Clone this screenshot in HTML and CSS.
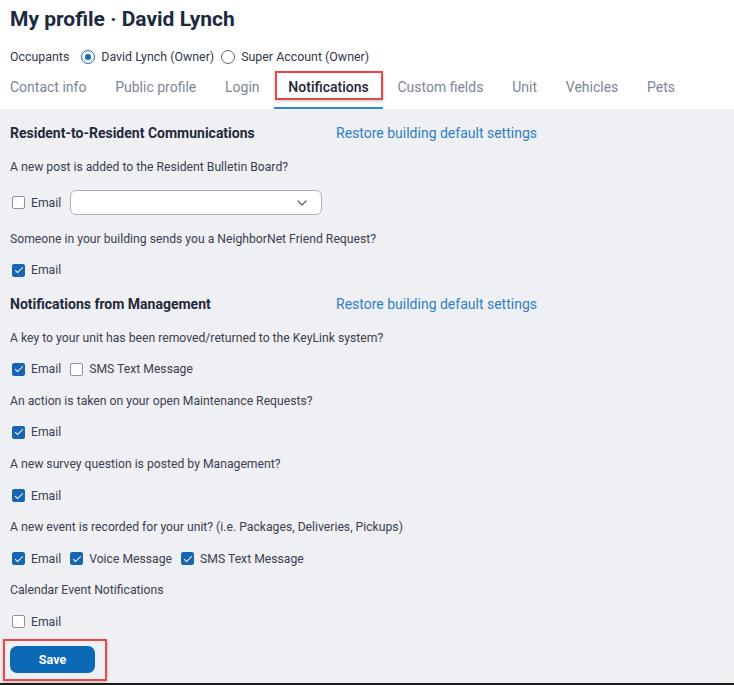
FILE: index.html
```html
<!DOCTYPE html>
<html lang="en">
<head>
<meta charset="utf-8">
<title>My profile · David Lynch</title>
<link rel="stylesheet" href="styles.css">
</head>
<body>
<div class="page">
  <header class="header">
    <h1 class="title">My profile · David Lynch</h1>
    <div class="occupants">
      <span class="occ-label">Occupants</span>
      <label class="radio"><span class="radio-dot checked"></span>David Lynch (Owner)</label>
      <label class="radio"><span class="radio-dot"></span>Super Account (Owner)</label>
    </div>
    <nav class="tabs">
      <span class="tab">Contact info</span>
      <span class="tab">Public profile</span>
      <span class="tab">Login</span>
      <span class="tab active">Notifications<span class="highlight"></span></span>
      <span class="tab">Custom fields</span>
      <span class="tab">Unit</span>
      <span class="tab">Vehicles</span>
      <span class="tab">Pets</span>
    </nav>
  </header>

  <main class="content">
    <div class="section-head">
      <span class="section-title">Resident-to-Resident Communications</span>
      <a class="restore">Restore building default settings</a>
    </div>
    <p class="question">A new post is added to the Resident Bulletin Board?</p>
    <div class="options select-row">
      <label class="check"><span class="box"></span>Email</label>
      <div class="select">
        <svg class="chev" viewBox="0 0 10 6" width="10" height="6"><path d="M1 1l4 4 4-4" fill="none" stroke="#6c7683" stroke-width="1.6" stroke-linecap="round" stroke-linejoin="round"/></svg>
      </div>
    </div>
    <p class="question">Someone in your building sends you a NeighborNet Friend Request?</p>
    <div class="options">
      <label class="check"><span class="box on"></span>Email</label>
    </div>

    <div class="section-head">
      <span class="section-title">Notifications from Management</span>
      <a class="restore">Restore building default settings</a>
    </div>
    <p class="question">A key to your unit has been removed/returned to the KeyLink system?</p>
    <div class="options">
      <label class="check"><span class="box on"></span>Email</label>
      <label class="check"><span class="box"></span>SMS Text Message</label>
    </div>
    <p class="question">An action is taken on your open Maintenance Requests?</p>
    <div class="options">
      <label class="check"><span class="box on"></span>Email</label>
    </div>
    <p class="question">A new survey question is posted by Management?</p>
    <div class="options">
      <label class="check"><span class="box on"></span>Email</label>
    </div>
    <p class="question">A new event is recorded for your unit? (i.e. Packages, Deliveries, Pickups)</p>
    <div class="options">
      <label class="check"><span class="box on"></span>Email</label>
      <label class="check"><span class="box on"></span>Voice Message</label>
      <label class="check"><span class="box on"></span>SMS Text Message</label>
    </div>
    <p class="question">Calendar Event Notifications</p>
    <div class="options">
      <label class="check"><span class="box"></span>Email</label>
    </div>
    <div class="actions">
      <button class="save">Save<span class="highlight save-hl"></span></button>
    </div>
  </main>
</div>
</body>
</html>
```

FILE: styles.css
```css
* { box-sizing: border-box; }

html, body {
  margin: 0;
  padding: 0;
  background: #eff0f4;
  font-family: Roboto, "Liberation Sans", Arial, sans-serif;
  color: #3b4250;
}

.page {
  width: 734px;
  height: 685px;
  overflow: hidden;
  display: flex;
  flex-direction: column;
}

.header {
  background: #ffffff;
  padding: 7px 0 0 10px;
}

.title {
  margin: 0;
  font-size: 21px;
  line-height: 24px;
  font-weight: 700;
  color: #1b2a40;
}

.occupants {
  margin-top: 18px;
  display: flex;
  align-items: center;
  font-size: 12.4px;
  line-height: 16px;
  color: #2f3a4c;
}

.occ-label { margin-right: 12px; }

.radio {
  display: flex;
  align-items: center;
  margin-right: 7px;
}

.radio-dot {
  width: 14px;
  height: 14px;
  border-radius: 50%;
  border: 1.5px solid #5b6470;
  margin-right: 6px;
  position: relative;
  background: #fff;
}

.radio-dot.checked { border-color: #1766b4; }

.radio-dot.checked::after {
  content: "";
  position: absolute;
  left: 2.5px;
  top: 2.5px;
  width: 6px;
  height: 6px;
  border-radius: 50%;
  background: #1766b4;
}

.tabs {
  display: flex;
  margin-top: 4px;
  margin-left: -10px;
  padding-left: 10px;
}

.tab {
  position: relative;
  font-size: 14px;
  line-height: 20px;
  padding: 8px 14.4px 10px;
  color: #7a8695;
  border-bottom: 2px solid transparent;
}

.tab:first-child { padding-left: 0; }

.tab.active {
  color: #1c2636;
  font-weight: 500;
  border-bottom-color: #2f86d1;
}

.highlight {
  position: absolute;
  left: 1px;
  top: 2px;
  width: 108px;
  height: 29px;
  border: 2.5px solid #e9474a;
  box-shadow: 0 1px 3px rgba(0,0,0,0.25);
  pointer-events: none;
}

.content {
  flex: 1;
  padding: 14px 10px 0;
  display: flex;
  flex-direction: column;
  gap: 15.6px;
  border-bottom: 2px solid #1b1c1d;
}

.section-head {
  display: grid;
  grid-template-columns: 326px auto;
  align-items: center;
  line-height: 20px;
  font-size: 14px;
}

.section-title {
  font-weight: 700;
  color: #1f2a3a;
}

.restore {
  color: #2e7fc5;
}

.question {
  margin: 0;
  font-size: 12.2px;
  line-height: 16px;
  color: #3a4150;
}

.options {
  display: flex;
  align-items: center;
  gap: 9px;
  height: 16px;
  padding-left: 2px;
}

.options.select-row { height: 25px; }

.check {
  display: flex;
  align-items: center;
  font-size: 12.2px;
  line-height: 16px;
  color: #3a4150;
}

.box {
  width: 13px;
  height: 13px;
  border-radius: 2px;
  border: 1.5px solid #8c939e;
  background: #fff;
  margin-right: 6px;
  position: relative;
}

.box.on {
  background: #1766b4;
  border-color: #1766b4;
}

.box.on::after {
  content: "";
  position: absolute;
  left: 3.5px;
  top: 0.5px;
  width: 3px;
  height: 7px;
  border: solid #fff;
  border-width: 0 1.6px 1.6px 0;
  transform: rotate(45deg);
}

.select {
  width: 252px;
  height: 25px;
  background: #fff;
  border: 1px solid #a8afb9;
  border-radius: 6px;
  display: flex;
  align-items: center;
  justify-content: flex-end;
  padding-right: 14px;
}

.actions {
  padding-top: 0;
}

.save {
  position: relative;
  width: 85px;
  height: 27px;
  border: none;
  border-radius: 7px;
  background: #0c69b6;
  color: #fff;
  font-family: Roboto, "Liberation Sans", Arial, sans-serif;
  font-size: 12.5px;
  font-weight: 700;
  padding: 0;
}

.save-hl {
  left: -7px;
  top: -7px;
  width: 104px;
  height: 42px;
}
```
